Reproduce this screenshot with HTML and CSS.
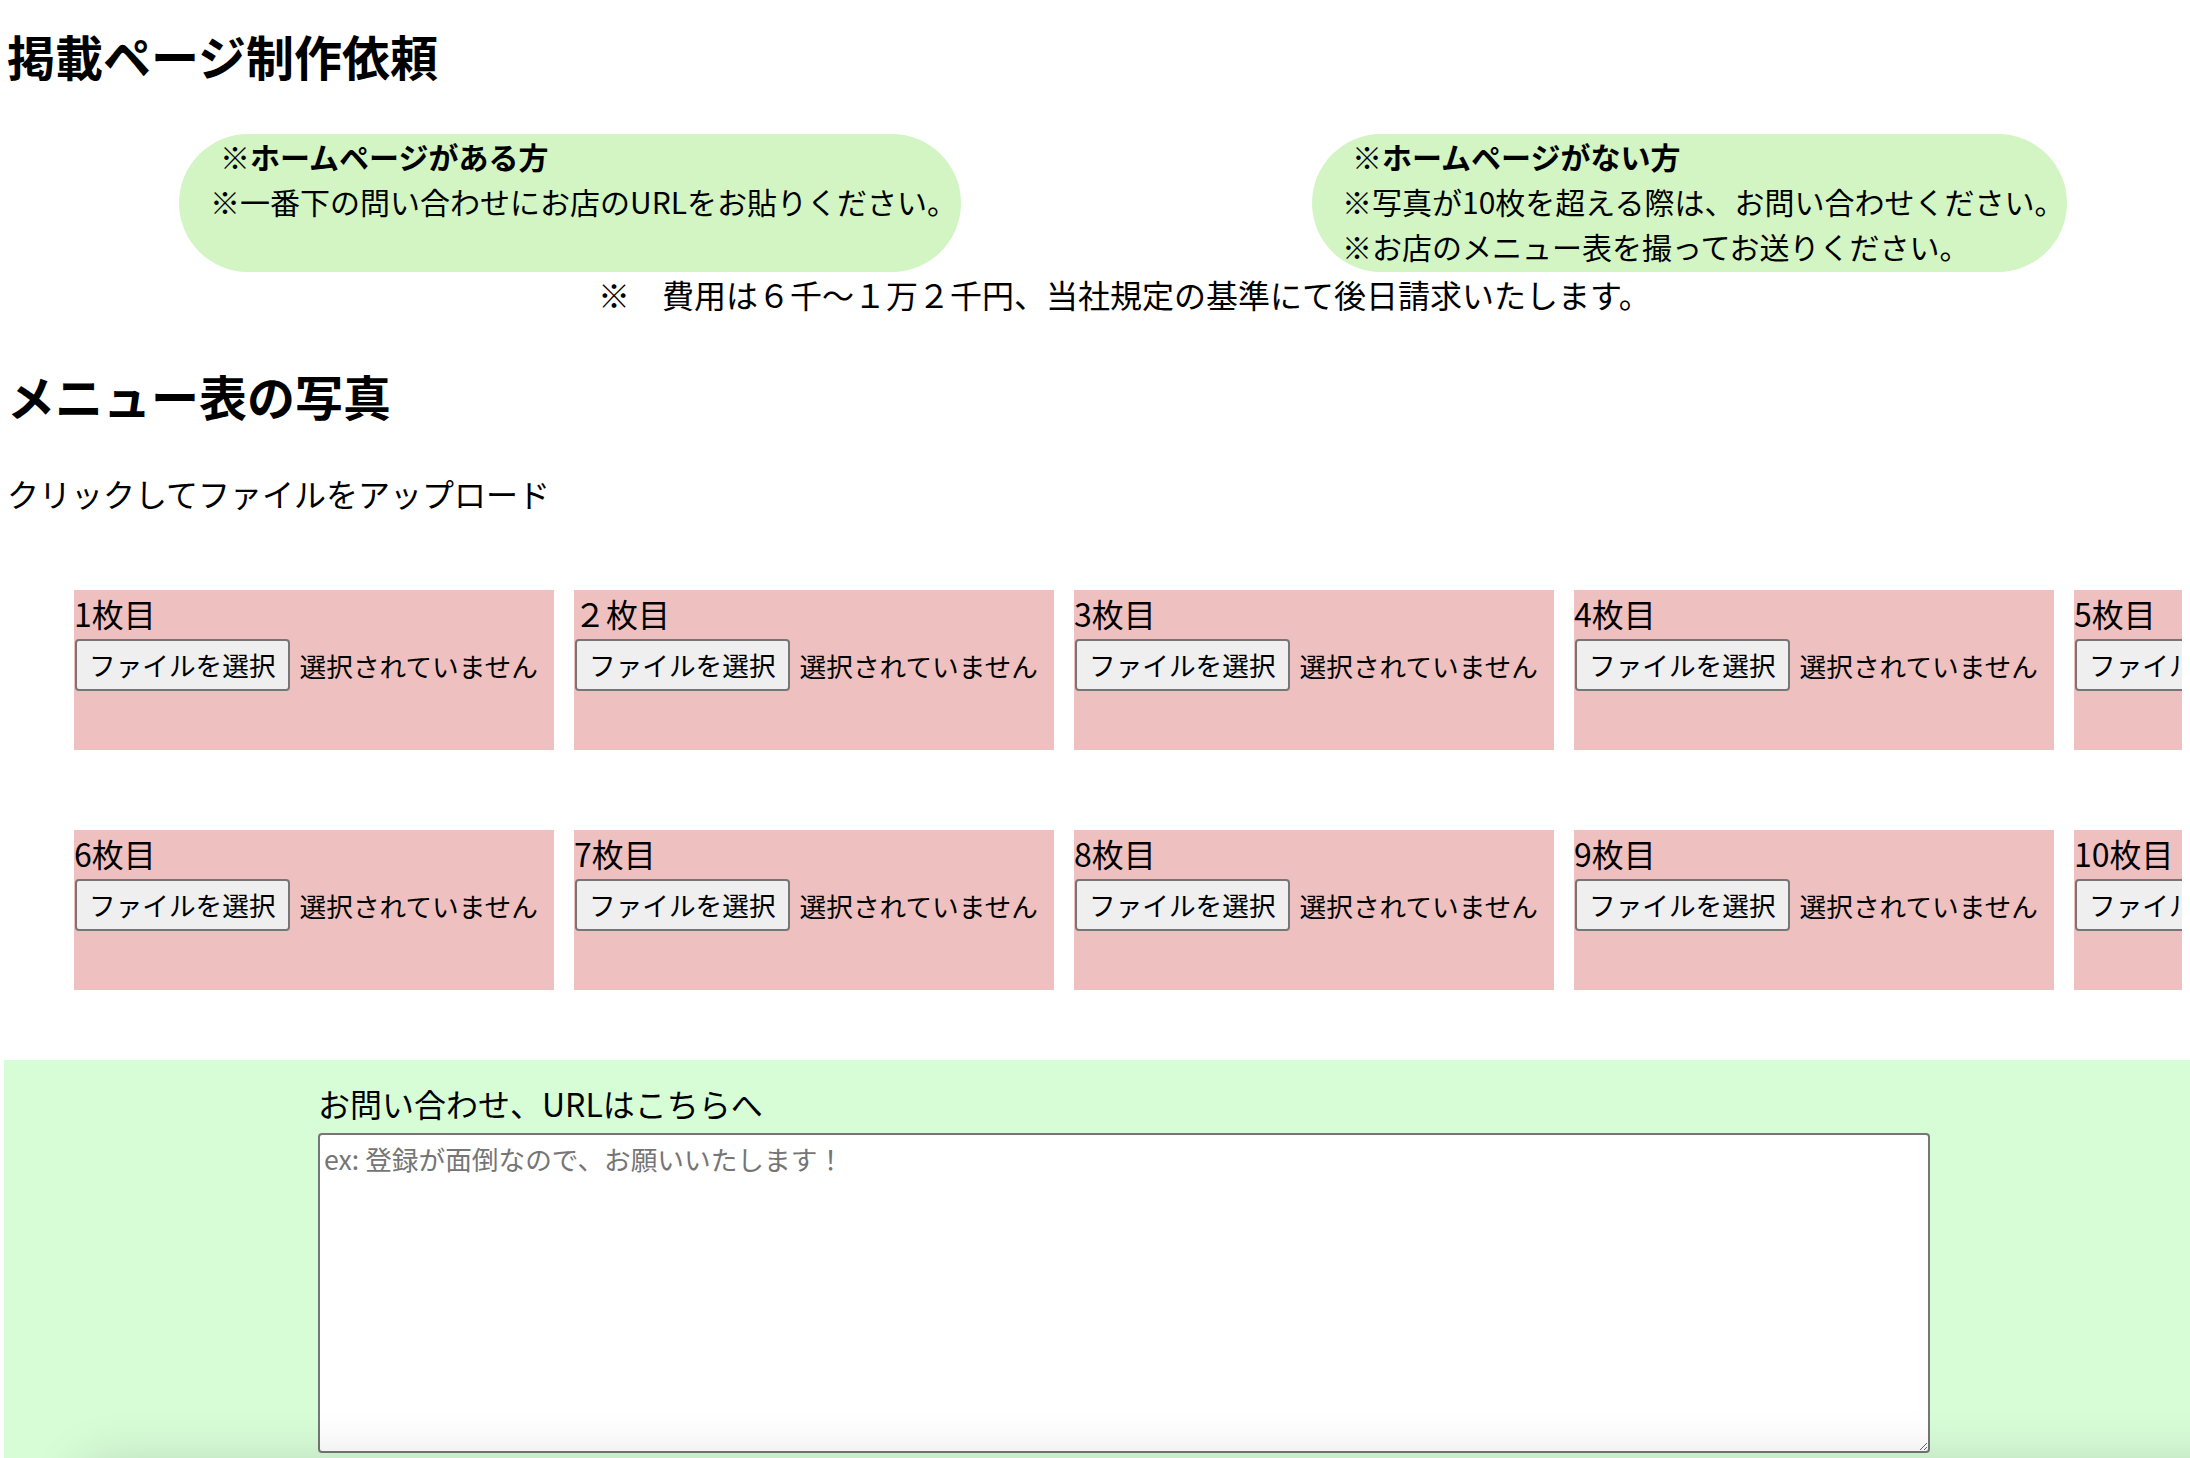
FILE: index.html
```html
<!DOCTYPE html>
<html lang="ja">
<head>
<meta charset="utf-8">
<title>掲載ページ制作依頼</title>
<link rel="stylesheet" href="styles.css">
</head>
<body>
<h2 class="title">掲載ページ制作依頼</h2>

<div class="notes">
  <div class="note note-has">
    <p class="note-head">※ホームページがある方</p>
    <p class="note-line">※一番下の問い合わせにお店のURLをお貼りください。</p>
  </div>
  <div class="note note-none">
    <p class="note-head">※ホームページがない方</p>
    <p class="note-line">※写真が10枚を超える際は、お問い合わせください。</p>
    <p class="note-line">※お店のメニュー表を撮ってお送りください。</p>
  </div>
</div>
<p class="fee">※　費用は６千〜１万２千円、当社規定の基準にて後日請求いたします。</p>

<h2 class="title menu-title">メニュー表の写真</h2>
<p class="upload-hint">クリックしてファイルをアップロード</p>

<div class="uploads">
  <div class="upload-row">
    <div class="slot"><div class="slot-label">1枚目</div><div class="file"><button class="file-btn" type="button">ファイルを選択</button><span class="file-name">選択されていません</span></div></div>
    <div class="slot"><div class="slot-label">２枚目</div><div class="file"><button class="file-btn" type="button">ファイルを選択</button><span class="file-name">選択されていません</span></div></div>
    <div class="slot"><div class="slot-label">3枚目</div><div class="file"><button class="file-btn" type="button">ファイルを選択</button><span class="file-name">選択されていません</span></div></div>
    <div class="slot"><div class="slot-label">4枚目</div><div class="file"><button class="file-btn" type="button">ファイルを選択</button><span class="file-name">選択されていません</span></div></div>
    <div class="slot"><div class="slot-label">5枚目</div><div class="file"><button class="file-btn" type="button">ファイルを選択</button><span class="file-name">選択されていません</span></div></div>
  </div>
  <div class="upload-row">
    <div class="slot"><div class="slot-label">6枚目</div><div class="file"><button class="file-btn" type="button">ファイルを選択</button><span class="file-name">選択されていません</span></div></div>
    <div class="slot"><div class="slot-label">7枚目</div><div class="file"><button class="file-btn" type="button">ファイルを選択</button><span class="file-name">選択されていません</span></div></div>
    <div class="slot"><div class="slot-label">8枚目</div><div class="file"><button class="file-btn" type="button">ファイルを選択</button><span class="file-name">選択されていません</span></div></div>
    <div class="slot"><div class="slot-label">9枚目</div><div class="file"><button class="file-btn" type="button">ファイルを選択</button><span class="file-name">選択されていません</span></div></div>
    <div class="slot"><div class="slot-label">10枚目</div><div class="file"><button class="file-btn" type="button">ファイルを選択</button><span class="file-name">選択されていません</span></div></div>
  </div>
</div>

<section class="contact">
  <label class="contact-label" for="msg">お問い合わせ、URLはこちらへ</label>
  <textarea id="msg" class="contact-text" placeholder="ex: 登録が面倒なので、お願いいたします！"></textarea>
</section>

<div class="bottom-shade"></div>
</body>
</html>
```

FILE: styles.css
```css
html, body {
  margin: 0;
  padding: 0;
  background: #ffffff;
}

body {
  font-family: "Noto Sans CJK JP", "Noto Sans", sans-serif;
  color: #000;
  overflow-x: hidden;
}

p {
  margin: 0;
}

.title {
  margin: 0;
  padding: 31px 0 0 7px;
  font-size: 48px;
  line-height: 48px;
  font-weight: 700;
}

.notes {
  display: flex;
  margin-top: 55px;
}

.note {
  box-sizing: border-box;
  height: 138px;
  background: #d3f5c4;
  border-radius: 70px;
  font-size: 30px;
  line-height: 45px;
  white-space: nowrap;
}

.note-has {
  margin-left: 179px;
  width: 782px;
  padding-left: 31px;
}

.note-none {
  margin-left: 351px;
  width: 755px;
  padding-left: 30px;
}

.note-head {
  font-weight: 700;
  margin-left: 10px;
}

.fee {
  margin-top: 6px;
  padding-left: 598px;
  font-size: 32px;
  line-height: 32px;
  white-space: nowrap;
}

.menu-title {
  padding-top: 61px;
}

.upload-hint {
  margin-top: 58px;
  padding-left: 7px;
  font-size: 32px;
  line-height: 32px;
}

.uploads {
  margin-top: 81px;
  margin-right: 8px;
  padding-left: 74px;
  display: flex;
  flex-direction: column;
  gap: 80px;
  overflow: hidden;
}

.upload-row {
  display: flex;
  gap: 20px;
}

.slot {
  flex: 0 0 480px;
  height: 160px;
  background: #efc0c0;
}

.slot-label {
  font-size: 32px;
  line-height: 46px;
  white-space: nowrap;
}

.file {
  display: flex;
  align-items: center;
  margin-top: 3px;
  white-space: nowrap;
}

.file-btn {
  box-sizing: border-box;
  height: 52px;
  margin: 0 0 0 1px;
  padding: 0 12px;
  border: 2px solid #767676;
  border-radius: 4px;
  background: #efefef;
  color: #000;
  font-family: "Noto Sans CJK JP", sans-serif;
  font-size: 26.67px;
  line-height: 1;
  flex: 0 0 auto;
}

.file-name {
  margin-left: 10px;
  font-size: 26.67px;
}

.contact {
  margin-top: 70px;
  margin-left: 4px;
  padding: 27px 0 60px 314px;
  background: #d7fdd7;
}

.contact-label {
  display: block;
  font-size: 32px;
  line-height: 32px;
}

.contact-text {
  display: block;
  box-sizing: border-box;
  margin-top: 14px;
  width: 1612px;
  height: 320px;
  padding: 4px;
  border: 2px solid #767676;
  border-radius: 4px;
  background: #fff;
  font-family: "Noto Sans CJK JP", sans-serif;
  font-size: 26.67px;
  color: #000;
}

.contact-text::placeholder {
  color: #757575;
}

.bottom-shade {
  position: fixed;
  left: 70px;
  right: -120px;
  bottom: -90px;
  height: 90px;
  border-radius: 45px;
  box-shadow: 0 0 50px 0 rgba(0, 0, 0, 0.13);
  pointer-events: none;
}
```
